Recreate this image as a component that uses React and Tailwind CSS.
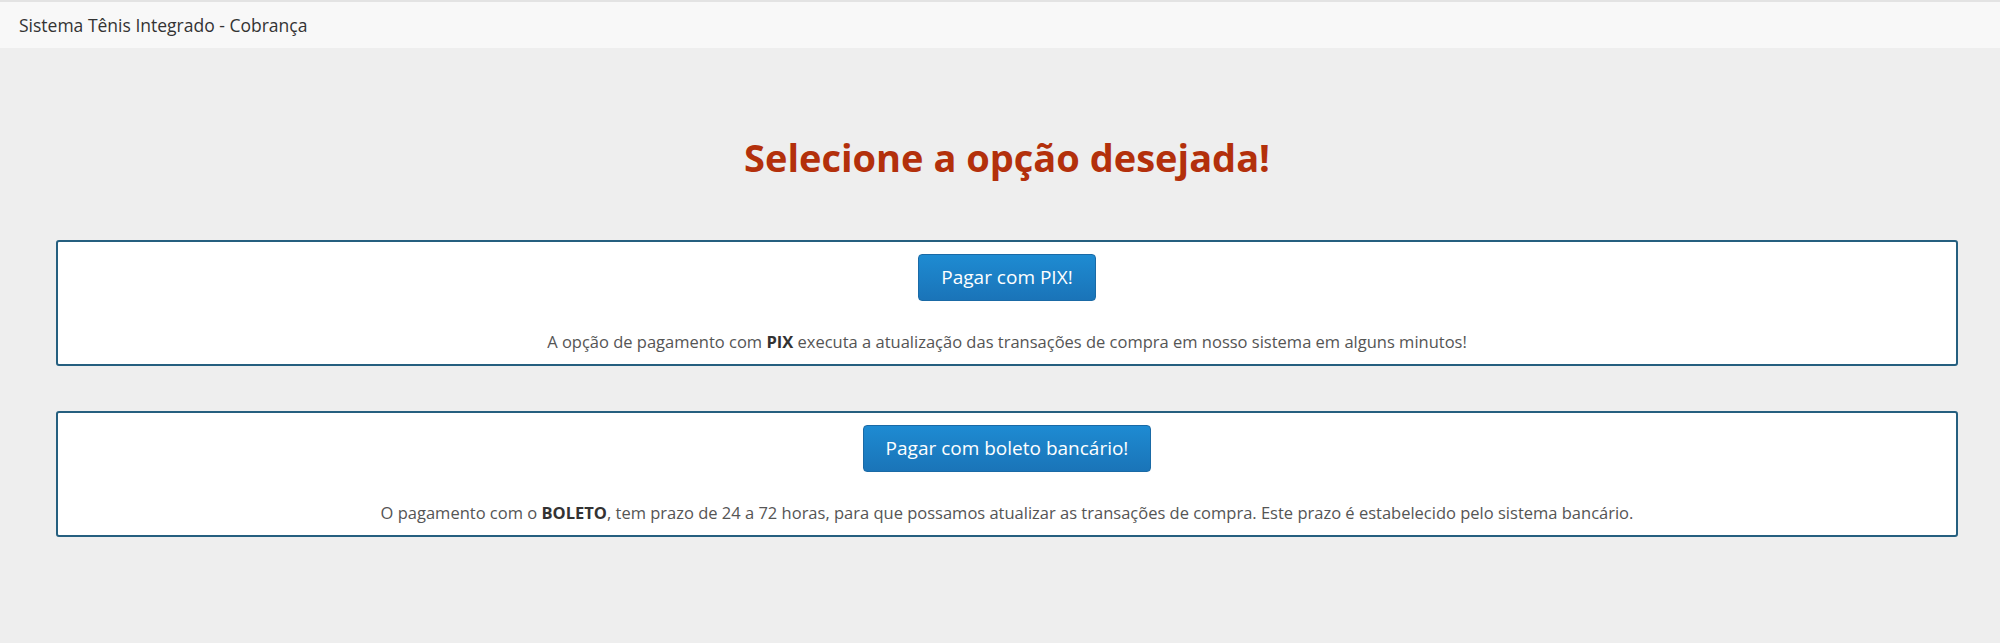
export default function App() {
  return (
    <div className="min-h-[643px] bg-[#eeeeee] font-['Open_Sans',sans-serif] text-[#555]">
      {/* top bar */}
      <div className="h-[48px] border-t-2 border-[#e3e3e3] bg-[#f8f8f8] flex items-center pl-[19px]">
        <span className="text-[17.5px] text-[#333]">Sistema Tênis Integrado - Cobrança</span>
      </div>

      <div className="ml-[56px] mr-[42px] pt-[87px]">
        <h1 className="text-center text-[38px] leading-[44px] font-bold text-[#b3300b]">
          Selecione a opção desejada!
        </h1>

        <div className="mt-[61px] flex flex-col gap-[45px]">
          <div className="bg-white border-2 border-[#255f7f] rounded-[3px] pt-[12px] pb-[12px] flex flex-col items-center">
            <button className="h-[47px] px-[22px] rounded-[4px] border border-[#1a6aa6] bg-gradient-to-b from-[#1e8bd2] to-[#1a74b8] text-white text-[19px]">
              Pagar com PIX!
            </button>
            <p className="mt-[31px] text-[16.5px] leading-[20px] text-[#555]">
              A opção de pagamento com <b className="text-[#333]">PIX</b> executa a atualização das transações de compra em nosso sistema em alguns minutos!
            </p>
          </div>

          <div className="bg-white border-2 border-[#255f7f] rounded-[3px] pt-[12px] pb-[12px] flex flex-col items-center">
            <button className="h-[47px] px-[22px] rounded-[4px] border border-[#1a6aa6] bg-gradient-to-b from-[#1e8bd2] to-[#1a74b8] text-white text-[19px]">
              Pagar com boleto bancário!
            </button>
            <p className="mt-[31px] text-[16.5px] leading-[20px] text-[#555]">
              O pagamento com o <b className="text-[#333]">BOLETO</b>, tem prazo de 24 a 72 horas, para que possamos atualizar as transações de compra. Este prazo é estabelecido pelo sistema bancário.
            </p>
          </div>
        </div>
      </div>
    </div>
  );
}
